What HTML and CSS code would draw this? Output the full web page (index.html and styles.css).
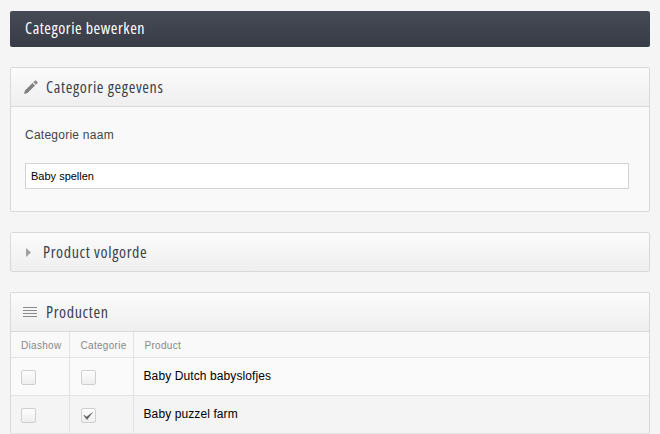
FILE: index.html
```html
<!DOCTYPE html>
<html lang="nl">
<head>
<meta charset="utf-8">
<title>Categorie bewerken</title>
<link rel="stylesheet" href="styles.css">
</head>
<body>
<main class="page">
  <h1 class="title-bar">Categorie bewerken</h1>

  <section class="panel">
    <header class="panel-head">
      <svg class="icon" width="16" height="16" viewBox="0 0 16 16"><path d="M1 15l1-3.500 7.500-7.500 2.500 2.500L4.500 14z" fill="#808080"/><path d="M10.300 3.200l1.500-1.500a1 1 0 0 1 1.400 0l1.100 1.100a1 1 0 0 1 0 1.400l-1.500 1.500z" fill="#8c8c8c"/></svg>
      <h2>Categorie gegevens</h2>
    </header>
    <div class="panel-body">
      <label class="field-label" for="naam">Categorie naam</label>
      <input class="field-input" id="naam" type="text" value="Baby spellen">
    </div>
  </section>

  <section class="panel">
    <header class="panel-head closed">
      <svg class="arrow" width="5" height="9" viewBox="0 0 5 9"><path d="M0 0l5 4.500L0 9z" fill="#a0a0a0"/></svg>
      <h2>Product volgorde</h2>
    </header>
  </section>

  <section class="panel last">
    <header class="panel-head">
      <svg class="icon" width="16" height="16" viewBox="0 0 16 16"><path d="M0 3.500h14M0 6.500h14M0 9.500h14M0 12.500h14" stroke="#8c8c8c" fill="none"/></svg>
      <h2>Producten</h2>
    </header>
    <table class="products">
      <thead>
        <tr><th class="col-a">Diashow</th><th class="col-b">Categorie</th><th>Product</th></tr>
      </thead>
      <tbody>
        <tr>
          <td><span class="check"></span></td>
          <td><span class="check"></span></td>
          <td class="name">Baby Dutch babyslofjes</td>
        </tr>
        <tr class="alt">
          <td><span class="check"></span></td>
          <td><span class="check"><svg width="13" height="13" viewBox="0 0 13 13"><path d="M1.500 6.500l1-.5 2 1.800L11.500 2.500 5 11z" fill="#666"/></svg></span></td>
          <td class="name">Baby puzzel farm</td>
        </tr>
      </tbody>
    </table>
  </section>
</main>
</body>
</html>
```
FILE: styles.css
```css
* { box-sizing: border-box; }
html, body { margin: 0; height: 434px; overflow: hidden; }
body {
  background: #f5f5f5;
  font-family: "Liberation Sans", Arial, sans-serif;
  font-size: 12px;
  color: #000;
}
.page { padding: 11px 10px 0; }
.title-bar {
  height: 36px;
  margin: 0 0 20px;
  padding: 0 15px;
  border-radius: 2px;
  background: linear-gradient(#454a55, #383c47);
  color: #fff;
  font: 400 16px/35px "Open Sans", sans-serif;
  font-stretch: 80%;
  letter-spacing: .55px;
}
.panel {
  margin-bottom: 20px;
  border: 1px solid #d9d9d9;
  border-radius: 2px;
  background: #f9f9f9;
}
.panel.last { margin-bottom: 0; border-bottom: 0; }
.panel-head {
  display: flex;
  align-items: center;
  height: 39px;
  padding-left: 12px;
  border-bottom: 1px solid #d9d9d9;
  background: linear-gradient(#fbfbfb, #efefef);
}
.panel-head.closed { border-bottom: 0; padding-left: 15px; height: 38px; }
.panel-head h2 {
  margin: 0;
  font: 400 16px/1 "Open Sans", sans-serif;
  font-stretch: 80%;
  letter-spacing: .65px;
  color: #3a4150;
}
.icon { margin-right: 7px; }
.arrow { margin-right: 12px; }
.panel-body { padding: 21px 20px 22px 14px; }
.field-label { display: block; color: #444; font-size: 12px; letter-spacing: .25px; line-height: 14px; margin-bottom: 21px; }
.field-input {
  display: block;
  width: 100%;
  height: 26px;
  padding: 0 5px;
  border: 1px solid #d2d2d2;
  border-radius: 0;
  background: #fff;
  font: 11px "Liberation Sans", Arial, sans-serif;
  color: #000;
}
.products { width: 100%; border-collapse: collapse; table-layout: fixed; }
.products th {
  height: 25px;
  padding: 2px 0 0 11px;
  border-bottom: 1px solid #e3e3e3;
  border-left: 1px solid #e3e3e3;
  background: #f9f9f9;
  color: #888;
  font-size: 10px;
  letter-spacing: .3px;
  font-weight: 400;
  text-align: left;
}
.products th:first-child, .products td:first-child { border-left: 0; padding-left: 10px; }
.col-a { width: 58px; }
.col-b { width: 64px; }
.products td {
  height: 38px;
  padding: 0 0 0 11px;
  border-bottom: 1px solid #e3e3e3;
  border-left: 1px solid #e3e3e3;
  background: #fafafa;
}
.products .alt td { background: #f4f4f4; }
.products td.name { font-size: 12px; letter-spacing: .1px; vertical-align: top; padding: 11px 0 0 10px; line-height: 14px; }
.check {
  display: flex;
  align-items: center;
  justify-content: center;
  width: 15px;
  height: 15px;
  margin-top: 3px;
  border: 1px solid #cfcfcf;
  border-radius: 2px;
  background: linear-gradient(#fdfdfd, #eeeeee);
}
```
